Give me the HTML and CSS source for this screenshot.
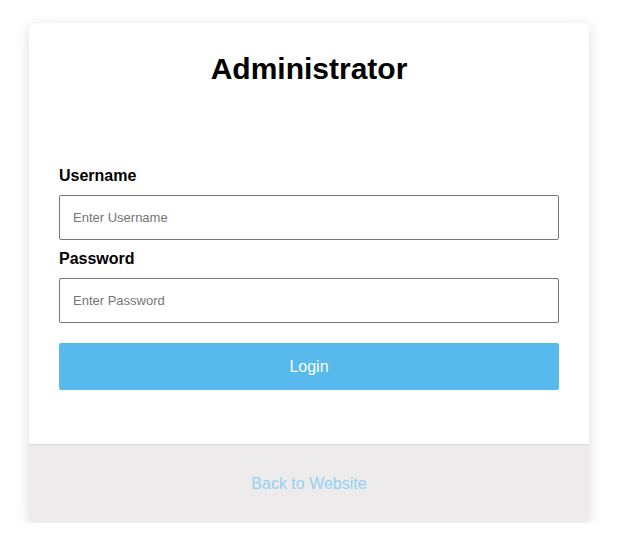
FILE: index.html
```html
<!DOCTYPE html>
<html lang="en">
<head>
<meta charset="utf-8">
<title>Administrator Login</title>
<link rel="stylesheet" href="styles.css">
</head>
<body>
<div class="card">
  <div class="card-body">
    <h1 class="title">Administrator</h1>
    <form class="form">
      <label class="label" for="username">Username</label>
      <input class="input" id="username" type="text" placeholder="Enter Username">
      <label class="label" for="password">Password</label>
      <input class="input" id="password" type="password" placeholder="Enter Password">
      <button class="btn" type="button">Login</button>
    </form>
  </div>
  <div class="card-footer">
    <a class="back-link" href="#">Back to Website</a>
  </div>
</div>
</body>
</html>
```

FILE: styles.css
```css
html, body {
  margin: 0;
  padding: 0;
  background: #ffffff;
  font-family: "Liberation Sans", Arial, sans-serif;
  color: #000;
}

.card {
  margin: 23px 0 0 29px;
  width: 560px;
  background: #ffffff;
  border-radius: 6px;
  box-shadow: 0 3px 14px rgba(0, 0, 0, 0.14);
  overflow: hidden;
}

.card-body {
  padding: 29px 30px 54px;
  display: flex;
  flex-direction: column;
}

.title {
  margin: 0;
  font-size: 30px;
  line-height: 34px;
  font-weight: bold;
  text-align: center;
}

.form {
  margin-top: 81px;
  display: flex;
  flex-direction: column;
}

.label {
  display: block;
  font-size: 16px;
  line-height: 18px;
  font-weight: bold;
  margin-bottom: 10px;
}

.input {
  box-sizing: border-box;
  width: 100%;
  height: 45px;
  margin: 0 0 10px;
  padding: 0 13px;
  border: 1px solid #767676;
  border-radius: 2px;
  font-family: "Liberation Sans", Arial, sans-serif;
  font-size: 13px;
  color: #000;
  background: #fff;
  outline: none;
}

.input::placeholder {
  color: #757575;
}

.btn {
  margin-top: 10px;
  height: 47px;
  width: 100%;
  border: none;
  border-radius: 2px;
  background: #57b9ec;
  color: #ffffff;
  font-family: "Liberation Sans", Arial, sans-serif;
  font-size: 16px;
  cursor: pointer;
}

.card-footer {
  height: 78px;
  border-top: 1px solid #dcdadb;
  background: #edebec;
  display: flex;
  align-items: center;
  justify-content: center;
}

.back-link {
  font-size: 16px;
  color: #94d1f0;
  text-decoration: none;
}
```
